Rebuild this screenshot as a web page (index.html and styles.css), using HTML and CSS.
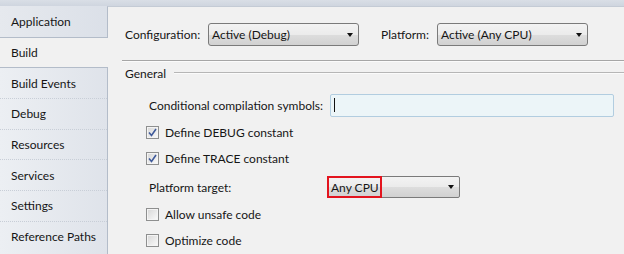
FILE: index.html
```html
<!DOCTYPE html>
<html lang="en">
<head>
    <meta charset="UTF-8">
    <meta name="viewport" content="width=device-width, initial-scale=1.0">
    <title>Project Properties - Build</title>
    <link rel="stylesheet" href="styles.css">
</head>
<body>
    <div class="top-strip"></div>

    <div class="window">
        <!-- Left tab list -->
        <nav class="tabs">
            <div class="tab">Application</div>
            <div class="tab active">Build</div>
            <div class="tab">Build Events</div>
            <div class="tab">Debug</div>
            <div class="tab">Resources</div>
            <div class="tab">Services</div>
            <div class="tab">Settings</div>
            <div class="tab">Reference Paths</div>
        </nav>

        <!-- Build page -->
        <section class="panel">
            <div class="toolbar">
                <span class="label config-label">Configuration:</span>
                <div class="combo combo-config">
                    <span class="combo-text">Active (Debug)</span>
                    <span class="arrow"></span>
                </div>
                <span class="label platform-label">Platform:</span>
                <div class="combo combo-platform">
                    <span class="combo-text">Active (Any CPU)</span>
                    <span class="arrow"></span>
                </div>
            </div>

            <div class="separator"></div>

            <div class="group-title">
                <span>General</span>
                <div class="group-line"></div>
            </div>

            <div class="row symbols-row">
                <span class="field-label symbols-label">Conditional compilation symbols:</span>
                <div class="textbox"><span class="caret"></span></div>
            </div>

            <div class="row check-row">
                <span class="checkbox">
                    <svg width="9" height="9" viewBox="0 0 9 9"><path d="M1 4.5 L3.5 7.5 L8 1" fill="none" stroke="#3f5a9a" stroke-width="1.6"/></svg>
                </span>
                <span>Define DEBUG constant</span>
            </div>

            <div class="row check-row">
                <span class="checkbox">
                    <svg width="9" height="9" viewBox="0 0 9 9"><path d="M1 4.5 L3.5 7.5 L8 1" fill="none" stroke="#3f5a9a" stroke-width="1.6"/></svg>
                </span>
                <span>Define TRACE constant</span>
            </div>

            <div class="row target-row">
                <span class="field-label target-label">Platform target:</span>
                <div class="combo combo-target">
                    <span class="combo-text">Any CPU</span>
                    <span class="arrow"></span>
                    <span class="highlight"></span>
                </div>
            </div>

            <div class="row check-row">
                <span class="checkbox"></span>
                <span>Allow unsafe code</span>
            </div>

            <div class="row check-row">
                <span class="checkbox"></span>
                <span>Optimize code</span>
            </div>
        </section>
    </div>
</body>
</html>
```

FILE: styles.css
```css
/* General Styles */
body {
    margin: 0;
    padding: 0;
    font-family: 'Segoe UI', 'Lato', sans-serif;
    font-size: 12px;
    color: #161616;
    background: #f1f1f1;
    overflow: hidden;
    height: 254px;
    white-space: nowrap;
}
.top-strip {
    height: 6px;
    background: linear-gradient(#d9dee6, #cfd5df);
}
.window {
    display: flex;
    height: 248px;
}

/* Left tabs */
.tabs {
    width: 107px;
    flex: none;
    background: linear-gradient(to right, #eceff3, #dfe3ea);
}
.tab {
    box-sizing: border-box;
    height: 30.7px;
    display: flex;
    align-items: center;
    padding-left: 11px;
    border-top: 1px dotted #c8ced7;
}
.tab:first-child {
    border-top: 1px solid transparent;
    background: linear-gradient(to right, #e6e9ee, #dbe0e8);
}
.tab.active {
    position: relative;
    z-index: 1;
    width: 108px;
    background: #f1f1f1;
    border-top: 1px solid #b3bcc9;
}
.tab.active + .tab {
    border-top: 1px solid #b3bcc9;
}

/* Right panel */
.panel {
    flex: 1;
    border-left: 1px solid #b3bcc9;
    border-top: 1px solid #c4cbd5;
    background: #f1f1f1;
    display: flex;
    flex-direction: column;
}
.toolbar {
    display: flex;
    align-items: center;
    height: 23px;
    padding: 16px 0 14px 17px;
}
.config-label {
    width: 83px;
}
.platform-label {
    width: 56px;
    margin-left: 22px;
}

/* Combo boxes */
.combo {
    box-sizing: border-box;
    position: relative;
    height: 23px;
    border: 1px solid #7a7a7a;
    border-radius: 3px;
    background: linear-gradient(#f3f3f3 0%, #ebebeb 50%, #dddddd 51%, #d1d1d1 100%);
    display: flex;
    align-items: center;
    padding-left: 3px;
}
.combo-config,
.combo-platform {
    width: 151px;
}
.combo-target {
    width: 133px;
    height: 22px;
    border-radius: 2px;
}
.combo-text {
    flex: 1;
}
.arrow {
    width: 0;
    height: 0;
    border-left: 3.5px solid transparent;
    border-right: 3.5px solid transparent;
    border-top: 4px solid #111;
    margin-right: 5px;
}
.highlight {
    position: absolute;
    left: -1px;
    top: -1px;
    width: 55px;
    height: 22px;
    box-sizing: border-box;
    border: 2px solid #e3141e;
}

/* Separators */
.separator {
    margin-left: 14px;
    height: 1px;
    background: #a6a6a6;
    border-bottom: 1px solid #fbfbfb;
}
.group-title {
    display: flex;
    align-items: center;
    height: 22px;
    padding-left: 17px;
}
.group-line {
    flex: 1;
    height: 1px;
    margin-left: 8px;
    background: #b6b6b6;
    border-bottom: 1px solid #fbfbfb;
}

/* Rows */
.row {
    display: flex;
    align-items: center;
    padding-left: 38px;
}
.symbols-row {
    height: 24px;
    margin-top: 9px;
    margin-bottom: 2px;
    padding-left: 41px;
}
.symbols-label {
    width: 181px;
}
.textbox {
    box-sizing: border-box;
    width: 284px;
    height: 23px;
    border: 1px solid #b2cde0;
    border-radius: 2px;
    background: #ecf5f8;
    display: flex;
    align-items: center;
}
.caret {
    width: 1px;
    height: 14px;
    margin-left: 3px;
    background: #111;
}
.check-row {
    height: 26px;
}
.checkbox {
    box-sizing: border-box;
    width: 13px;
    height: 13px;
    border: 1px solid #8e8f8f;
    background: linear-gradient(135deg, #d6d6d6, #fbfbfb);
    box-shadow: inset 0 0 0 1px #f4f4f4;
    display: flex;
    align-items: center;
    justify-content: center;
    margin-right: 6px;
}
.target-row {
    height: 24px;
    margin-top: 4px;
    margin-bottom: 2px;
    padding-left: 41px;
}
.target-label {
    width: 178px;
}
```
